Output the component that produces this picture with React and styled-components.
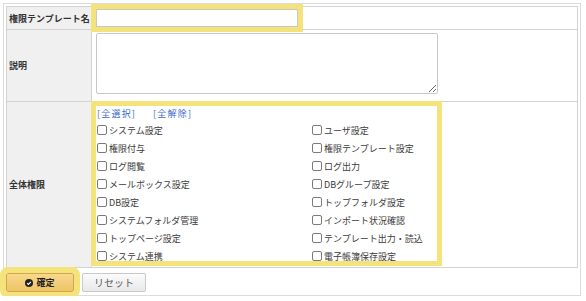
import React from "react";
import styled, { createGlobalStyle } from "styled-components";

const GlobalStyle = createGlobalStyle`
  body {
    margin: 0;
    background: #ffffff;
    font-family: "Noto Sans CJK JP", "Noto Sans", sans-serif;
    color: #333;
  }
`;

const Page = styled.div`
  padding: 3px 0 0 3px;
`;

const Frame = styled.div`
  width: 578px;
  box-sizing: border-box;
  border: 1px solid #dcdcdc;
  padding: 2px 2px 3px 2px;
`;

const FormTable = styled.table`
  width: 572px;
  border-collapse: collapse;
  border: 1px solid #d3d3d3;
`;

const Row = styled.tr`
  height: ${({ $h }) => $h}px;
`;

const Label = styled.th`
  width: 82px;
  background: #f0f0f0;
  border: 1px solid #d3d3d3;
  padding: 0 0 0 2px;
  text-align: left;
  vertical-align: middle;
  font-size: 9px;
  font-weight: 700;
  color: #333;
  white-space: nowrap;
`;

const Cell = styled.td`
  border: 1px solid #d3d3d3;
  padding: ${({ $pad }) => $pad};
  vertical-align: top;
  background: #fff;
`;

const NameInput = styled.input`
  display: block;
  width: 202px;
  height: 18px;
  box-sizing: border-box;
  border: 1px solid #c8c8c8;
  outline: 5px solid #f4e27a;
  margin: 0;
`;

const Memo = styled.textarea`
  display: block;
  width: 342px;
  height: 61px;
  box-sizing: border-box;
  border: 1px solid #c8c8c8;
  border-radius: 2px;
  margin: 0;
`;

const PermBox = styled.div`
  width: 341px;
  height: 155px;
  outline: 5px solid #f4e27a;
  font-size: 9px;
`;

const Links = styled.div`
  display: flex;
  gap: 17px;
  height: 15px;
  align-items: center;
  padding-left: 1px;
`;

const Link = styled.a`
  color: #3a6ccc;
  text-decoration: none;
  cursor: pointer;
  letter-spacing: 1.2px;
`;

const Grid = styled.div`
  display: grid;
  grid-template-columns: 215px 1fr;
  grid-auto-rows: 18px;
`;

const Item = styled.label`
  display: flex;
  align-items: center;
  gap: 2px;
  color: #3c3c3c;
  white-space: nowrap;
`;

const Box = styled.span`
  width: 8px;
  height: 8px;
  border: 1px solid #7a7a7a;
  border-radius: 2px;
  background: #fff;
  margin-left: 1px;
`;

const Actions = styled.div`
  display: flex;
  gap: 8px;
  padding-top: 5px;
`;

const Button = styled.button`
  height: 19px;
  width: ${({ $w }) => $w}px;
  box-sizing: border-box;
  display: flex;
  align-items: center;
  justify-content: center;
  gap: 3px;
  font-family: "Noto Sans CJK JP", sans-serif;
  padding: 0;
  border-radius: 2px;
  cursor: pointer;
  ${({ $primary }) =>
    $primary
      ? `
    font-size: 9px;
    background: linear-gradient(#f8d88c, #eec466);
    border: 1px solid #d4a64a;
    color: #222;
    font-weight: 700;
    outline: 6px solid #f4e27a;
  `
      : `
    font-size: 10px;
    background: linear-gradient(#fbfbfb, #e9e9e9);
    border: 1px solid #c9c9c9;
    color: #5a5a5a;
  `}
`;

const left = [
  "システム設定",
  "権限付与",
  "ログ閲覧",
  "メールボックス設定",
  "DB設定",
  "システムフォルダ管理",
  "トップページ設定",
  "システム連携",
];

const right = [
  "ユーザ設定",
  "権限テンプレート設定",
  "ログ出力",
  "DBグループ設定",
  "トップフォルダ設定",
  "インポート状況確認",
  "テンプレート出力・読込",
  "電子帳簿保存設定",
];

const CheckIcon = () => (
  <svg width="8" height="8" viewBox="0 0 16 16">
    <circle cx="8" cy="8" r="8" fill="#222" />
    <path d="M4.2 8.3l2.6 2.6 5-5.2" stroke="#fff" strokeWidth="2.2" fill="none" />
  </svg>
);

export default function App() {
  const items = [];
  left.forEach((l, i) => {
    items.push(l, right[i]);
  });

  return (
    <Page>
      <GlobalStyle />
      <Frame>
        <FormTable>
          <tbody>
            <Row $h={23}>
              <Label>権限テンプレート名</Label>
              <Cell $pad="2px 0 0 4px">
                <NameInput />
              </Cell>
            </Row>
            <Row $h={72}>
              <Label>説明</Label>
              <Cell $pad="3px 0 0 4px">
                <Memo />
              </Cell>
            </Row>
            <Row $h={166}>
              <Label>全体権限</Label>
              <Cell $pad="4px 0 0 4px">
                <PermBox>
                  <Links>
                    <Link>[全選択]</Link>
                    <Link>[全解除]</Link>
                  </Links>
                  <Grid>
                    {items.map((t) => (
                      <Item key={t}>
                        <Box />
                        {t}
                      </Item>
                    ))}
                  </Grid>
                </PermBox>
              </Cell>
            </Row>
          </tbody>
        </FormTable>
        <Actions>
          <Button $primary $w={68}>
            <CheckIcon />
            確定
          </Button>
          <Button $w={64}>リセット</Button>
        </Actions>
      </Frame>
    </Page>
  );
}
